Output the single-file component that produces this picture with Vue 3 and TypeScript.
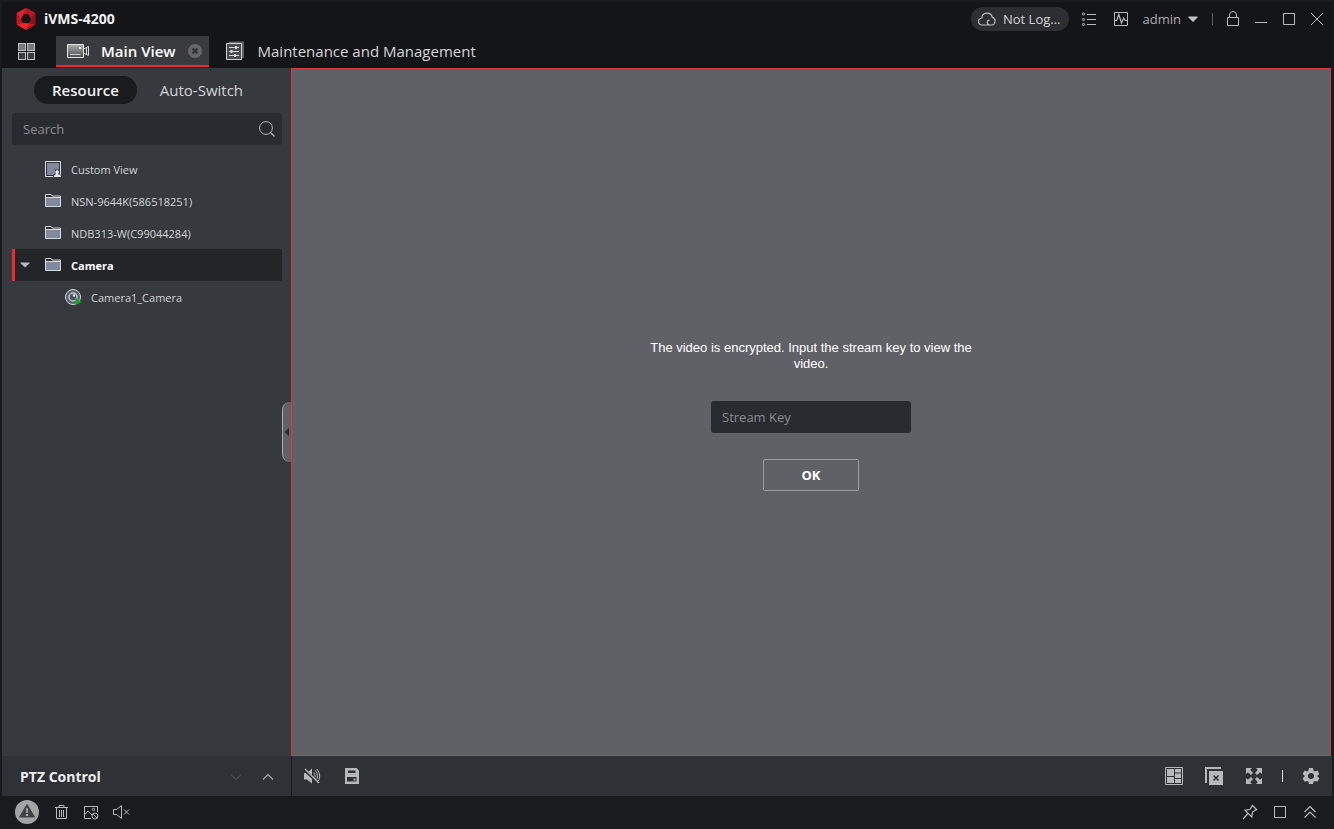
<script setup lang="ts">
import { ref } from 'vue'

interface TreeNode {
  label: string
  icon: 'view' | 'folder' | 'camera'
  expanded?: boolean
  selected?: boolean
  child?: boolean
}

const nodes: TreeNode[] = [
  { label: 'Custom View', icon: 'view' },
  { label: 'NSN-9644K(586518251)', icon: 'folder' },
  { label: 'NDB313-W(C99044284)', icon: 'folder' },
  { label: 'Camera', icon: 'folder', expanded: true, selected: true },
  { label: 'Camera1_Camera', icon: 'camera', child: true },
]

const search = ref('')
const streamKey = ref('')
</script>

<template>
  <div class="window">
    <header class="titlebar">
      <div class="brand">
        <svg class="logo" width="20" height="22" viewBox="0 0 20 22">
          <path d="M10 0L19.300 5v11.500L10 22 .7 16.500V5z" fill="#b3141b" />
          <path d="M10 0L.7 5 4.500 11.500 7.500 6z" fill="#d8262c" />
          <path d="M10 0l9.300 5L15 10.500 12.500 6h-5z" fill="#b51a20" />
          <path d="M19.300 5v11.500L13 15.500l2-5z" fill="#8e0f16" />
          <path d="M.7 5v11.500l6-1.500-2.200-4z" fill="#c9121a" />
          <path d="M.7 16.500L10 22l3.500-6.500L6.700 15z" fill="#f0222a" />
          <path d="M13.500 15.500L10 22l9.300-5.500z" fill="#c8161d" />
          <path d="M8 6h4l3 5-1.800 4H6.800L5 11z" fill="#141518" />
        </svg>
        <span>iVMS-4200</span>
      </div>
      <div class="tools">
        <button class="login">
          <svg width="18" height="16" viewBox="0 0 18 16" fill="none" stroke="#b9babb" stroke-width="1.200">
            <path d="M9 14H4.200A3.500 3.500 0 0 1 3.800 7a5.300 5.300 0 0 1 10.500-.6A3.900 3.900 0 0 1 13.700 14H12c-3.500 0-3.600-4.600-.4-4.800M9 14h4" />
          </svg>
          <span>Not Log...</span>
        </button>
        <button class="ico" aria-label="Task list">
          <svg width="16" height="16" viewBox="0 0 16 16" fill="none" stroke="#b9babb">
            <path d="M6 3.500h9M6 8.500h9M6 13.500h9" />
            <circle cx="2.500" cy="3" r="1.100" /><circle cx="2.500" cy="8.500" r="1.100" /><circle cx="2.500" cy="13.500" r="1.100" />
          </svg>
        </button>
        <button class="ico" aria-label="Activity">
          <svg width="16" height="16" viewBox="0 0 16 16" fill="none" stroke="#b9babb">
            <path d="M1.500 1.500h13v13h-13z" /><path d="M1.500 9.500h2.200l2.100-6 2.700 8.500 2.200-5 1.500 2.500h2.300" stroke-width="1.200" />
          </svg>
        </button>
        <button class="user">
          <span>admin</span>
          <svg width="10" height="6" viewBox="0 0 10 6"><path d="M.5.500h9v1L5 6 .5 1.500z" fill="#c4c4c4" /></svg>
        </button>
        <i class="rule"></i>
        <button class="ico lock" aria-label="Lock">
          <svg width="16" height="16" viewBox="0 0 16 16" fill="none" stroke="#b9babb">
            <path d="M2.500 6.500h11v8h-11zM4.500 6.500V4a3.500 3.500 0 0 1 7 0v2.500" />
          </svg>
        </button>
        <button class="ico win" aria-label="Minimize">
          <svg width="16" height="16" viewBox="0 0 16 16"><path d="M2 11.500h12" stroke="#b9babb" /></svg>
        </button>
        <button class="ico win" aria-label="Maximize">
          <svg width="16" height="16" viewBox="0 0 16 16"><path d="M2.500 2.500h11v11h-11z" fill="none" stroke="#b9babb" /></svg>
        </button>
        <button class="ico win" aria-label="Close">
          <svg width="16" height="16" viewBox="0 0 16 16"><path d="M2 2l12 12M14 2L2 14" stroke="#b9babb" /></svg>
        </button>
      </div>
    </header>

    <nav class="tabs">
      <button class="apps" aria-label="All modules">
        <svg width="17" height="17" viewBox="0 0 17 17" stroke="#c0c1c2">
          <g fill="#77797b"><rect x=".5" y=".5" width="7" height="7" /><rect x="9.500" y=".5" width="7" height="7" /></g>
          <g fill="#3a3c3e"><rect x=".5" y="9.500" width="7" height="7" /><rect x="9.500" y="9.500" width="7" height="7" /></g>
        </svg>
      </button>
      <div class="tab active">
        <button class="tab-name">
          <svg width="23" height="16" viewBox="0 0 23 16">
            <defs><linearGradient id="cam" x2="0" y2="1"><stop stop-color="#aeaeae" /><stop offset="1" stop-color="#4a4b4d" /></linearGradient></defs>
            <path d="M.5 1.500h16v13H.5z" fill="url(#cam)" stroke="#e3e3e3" />
            <path d="M3 11.500h10.500" stroke="#d5d5d5" /><path d="M12 4h2v2h-2z" fill="#eee" />
            <path d="M16.500 6l5-2.500v9l-5-2.500M19.500 4.500v7" fill="none" stroke="#dadada" />
          </svg>
          <span>Main View</span>
        </button>
        <button class="tab-close" aria-label="Close tab">
          <svg width="14" height="14" viewBox="0 0 14 14"><circle cx="7" cy="7" r="7" fill="#66676a" /><path d="M4.500 4.500l5 5M9.500 4.500l-5 5" stroke="#2e2f31" stroke-width="2" /></svg>
        </button>
      </div>
      <button class="tab plain">
        <svg width="20" height="20" viewBox="0 0 20 20">
          <path d="M4 .5h15V17h-2V3H4z" fill="#606163" />
          <path d="M1.500 2.500h15v16h-15z" fill="#4a4b4e" stroke="#d0d0d0" />
          <path d="M4 6.500h10M4 10.500h10M4 14.500h10" stroke="#d8d8d8" />
          <path d="M10 5h2v3h-2zM5.500 9h2v3h-2zM9 13h2v3H9z" fill="#d8d8d8" />
        </svg>
        <span>Maintenance and Management</span>
      </button>
    </nav>

    <main class="body">
      <aside class="side">
        <div class="modes">
          <button class="mode on">Resource</button>
          <button class="mode">Auto-Switch</button>
        </div>
        <label class="search">
          <input v-model="search" type="text" placeholder="Search" aria-label="Search" />
          <svg width="16" height="16" viewBox="0 0 16 16" fill="none" stroke="#b3b4b6"><circle cx="7" cy="7" r="6.400" /><path d="M11.500 11.500l4 4" stroke-width="1.200" /></svg>
        </label>
        <ul class="tree">
          <li v-for="node in nodes" :key="node.label" :class="{ selected: node.selected, child: node.child }">
            <button class="node">
              <span class="twist">
                <svg v-if="node.expanded" width="10" height="6" viewBox="0 0 10 6"><path d="M.5.500h9v.7L5 5.500.5 1.200z" fill="#b8b9ba" /></svg>
              </span>
              <svg v-if="node.icon === 'view'" width="16" height="16" viewBox="0 0 16 16">
                <path d="M.5.500h15v15H.5z" fill="#2d3034" stroke="#e0e1e3" /><path d="M2 2h12v12H2z" fill="#8189a0" />
                <path d="M8 16c0-3 1-3 2.500-3.500L9.700 8.500h4.600l-.8 4C15.500 13 16 13.500 16 16z" fill="#36393e" />
                <path d="M9 16c0-2 1-2.500 2.200-2.800-1.500-1.700-.9-4 1-4s2.300 2.300.8 4C15 13.500 16 14 16 16z" fill="#e8e8e8" />
              </svg>
              <svg v-else-if="node.icon === 'folder'" width="16" height="14" viewBox="0 0 16 14">
                <path d="M.5 12.500V.500h5.700l1 1.500h8.300v10.500z" fill="#2d3034" stroke="#d6d7d9" />
                <path d="M1 3.500h14" stroke="#d6d7d9" /><path d="M1 4h14v8H1z" fill="#8189a0" />
              </svg>
              <svg v-else width="17" height="17" viewBox="0 0 17 17">
                <circle cx="8" cy="8" r="7.500" fill="#59616e" stroke="#d7dae0" /><circle cx="8" cy="8" r="4" fill="#4b5261" stroke="#bfc4ce" stroke-width="1.500" />
                <circle cx="9" cy="6.500" r="1.300" fill="#e4e6ea" /><path d="M10.500 9v7.500l6-3.700z" fill="#12a51f" />
              </svg>
              <span class="name">{{ node.label }}</span>
            </button>
          </li>
        </ul>
        <button class="collapse" aria-label="Collapse panel">
          <svg width="5" height="8" viewBox="0 0 5 8"><path d="M5 0v8L.5 4z" fill="#2b2e32" /></svg>
        </button>
      </aside>
      <section class="video">
        <form class="prompt" @submit.prevent>
          <p>The video is encrypted. Input the stream key to view the video.</p>
          <input v-model="streamKey" type="text" placeholder="Stream Key" aria-label="Stream Key" />
          <button type="submit">OK</button>
        </form>
      </section>
    </main>

    <div class="controls">
      <div class="ptz">
        <h2>PTZ Control</h2>
        <button class="ico" aria-label="Down"><svg width="16" height="16" viewBox="0 0 16 16"><path d="M3 5.500l5 5 5-5" fill="none" stroke="#5c5f63" /></svg></button>
        <button class="ico" aria-label="Up"><svg width="16" height="16" viewBox="0 0 16 16"><path d="M3 10.500l5-5 5 5" fill="none" stroke="#a9abad" stroke-width="1.200" /></svg></button>
      </div>
      <div class="viewbar">
        <button class="big" aria-label="Audio off">
          <svg width="18" height="18" viewBox="0 0 18 18">
            <path d="M1 6h3l5-4.500v15L4 12.500H1z" fill="#b7b8b9" />
            <path d="M11 5.500q2.500 3.500 0 7M12.500 3.500q4 5.500 0 11M14 2q5.500 7 0 14" fill="none" stroke="#b7b8b9" />
            <path d="M1 2.500l15 14" stroke="#2e3136" stroke-width="3" /><path d="M2 2l14 14" stroke="#b7b8b9" stroke-width="1.300" />
          </svg>
        </button>
        <button class="big" aria-label="Save view">
          <svg width="18" height="18" viewBox="0 0 18 18">
            <path fill-rule="evenodd" d="M2 1h11.500L16 3.500V17H2zM5 3.500v2.500h7.500V3.500zM4 10v4.500h9.500V10zM10.500 11.500h2v2h-2z" fill="#b7b8b9" />
          </svg>
        </button>
        <span class="fill"></span>
        <button class="big" aria-label="Window division">
          <svg width="18" height="18" viewBox="0 0 18 18">
            <path d="M.5.500h17v17H.5z" fill="none" stroke="#b7b8b9" />
            <path d="M2 2h7v7H2zM2 10h7v6H2zM10 2h6v3.500h-6zM10 6.500h6V11h-6zM10 12h6v4h-6z" fill="#b7b8b9" />
          </svg>
        </button>
        <button class="big" aria-label="Close all">
          <svg width="18" height="18" viewBox="0 0 18 18">
            <path d="M0 0h16v2H2v14H0z" fill="#b7b8b9" /><path d="M4 4h14v14H4z" fill="#b7b8b9" /><path d="M8.500 8.500l5 5M13.500 8.500l-5 5" stroke="#2e3136" stroke-width="1.500" />
          </svg>
        </button>
        <button class="big" aria-label="Full screen">
          <svg width="18" height="18" viewBox="0 0 18 18" fill="#b7b8b9">
            <path d="M1 1h6L5.200 3 8 6 6 8 3 5.200 1 7zM17 1v6l-2-1.800L12 8l-2-2 2.800-3L11 1zM1 17v-6l2 1.800L6 10l2 2-2.800 3L7 17zM17 17h-6l1.800-2L10 12l2-2 3 2.800 2-1.800z" />
          </svg>
        </button>
        <i class="rule light"></i>
        <button class="big" aria-label="Settings">
          <svg width="18" height="18" viewBox="0 0 18 18">
            <path fill-rule="evenodd" fill="#b7b8b9" d="M7 1h4l.5 2.500 1.500.9 2.400-.9 2 3.400L15.500 8.500v1.300l1.900 1.500-2 3.400-2.400-.8-1.500.9L11 17H7l-.5-2.200-1.500-.9-2.400.8-2-3.400 1.900-1.500V8.500L.6 6.900l2-3.400 2.400.9 1.500-.9zM9 6a3 3 0 1 0 0 6 3 3 0 0 0 0-6z" />
          </svg>
        </button>
      </div>
    </div>

    <footer class="status">
      <button class="alarm" aria-label="Alarm">
        <svg width="24" height="24" viewBox="0 0 24 24"><circle cx="12" cy="12" r="12" fill="#a3a4a5" /><path d="M12 4.500l7.500 12.500h-15z" fill="#414345" stroke="#414345" stroke-linejoin="round" /><path d="M11 8.500h2l-.4 4.500h-1.200zM11 14h2v2h-2z" fill="#b5b6b7" /></svg>
      </button>
      <button class="ico" aria-label="Delete">
        <svg width="16" height="16" viewBox="0 0 16 16" fill="none" stroke="#b9babb"><path d="M2 3.500h13M6 3V1.500h5V3M3.500 4v10.500h10V4M6.500 6v7M8.500 6v7M10.500 6v7" /></svg>
      </button>
      <button class="ico" aria-label="Disable pictures">
        <svg width="16" height="16" viewBox="0 0 16 16" fill="none" stroke="#b9babb"><path d="M8 14.500H1.500v-12h13V8M2 10.500l3-3.500 4 4" /><circle cx="10.500" cy="5.500" r="1.200" /><circle cx="12" cy="12" r="3" /><path d="M10 10l4 4" /></svg>
      </button>
      <button class="ico" aria-label="Mute">
        <svg width="18" height="16" viewBox="0 0 18 16" fill="none" stroke="#b9babb"><path d="M.5 5.500h3L8.500 1.500v13l-5-4h-3zM11 5.500l5 5M16 5.500l-5 5" /></svg>
      </button>
      <span class="fill"></span>
      <button class="ico" aria-label="Pin">
        <svg width="16" height="16" viewBox="0 0 16 16" fill="none" stroke="#b9babb" stroke-width="1.200"><path d="M10 1l5 5M10.500 1.500L8 5.500l-5 .7L9.800 13l.7-5L14.500 5.500M6 9.500L1 15" /></svg>
      </button>
      <button class="ico" aria-label="Restore"><svg width="16" height="16" viewBox="0 0 16 16"><path d="M2.500 2.500h11v11h-11z" fill="none" stroke="#b9babb" /></svg></button>
      <button class="ico" aria-label="Expand"><svg width="16" height="16" viewBox="0 0 16 16" fill="none" stroke="#b9babb" stroke-width="1.200"><path d="M2.500 8L8 2.500 13.500 8M2.500 13.500L8 8l5.500 5.500" /></svg></button>
    </footer>
  </div>
</template>

<style>
body { background: #191c1e; }
</style>

<style scoped>
.window {
  box-sizing: border-box;
  min-height: 100vh;
  display: flex;
  flex-direction: column;
  padding: 2px 2px 0;
  background: #191c1e;
  color: #d4d5d6;
  font: 13px/16px "Open Sans", "Noto Sans", sans-serif;
}
button, input { font: inherit; color: inherit; background: none; border: 0; padding: 0; margin: 0; }
button { cursor: pointer; }
svg { display: block; flex: none; }
.fill { flex: 1; }
.titlebar { display: flex; justify-content: space-between; height: 34px; background: #141518; }
.brand { display: flex; align-items: center; gap: 8px; padding-left: 14px; color: #f2f2f2; font-size: 14px; font-weight: 700; }
.tools { display: flex; align-items: center; gap: 16px; padding-right: 7px; }
.login { display: flex; align-items: center; gap: 7px; height: 24px; padding: 0 8px 0 7px; border-radius: 12px; background: #2d2e32; margin-right: -4px; }
.user { display: flex; align-items: center; gap: 7px; color: #acadae; margin-left: -2px; }
.rule { width: 1px; height: 12px; background: #5a5c5e; margin-left: -2px; }
.rule.light { background: #d9dadb; }
.lock, .win { margin-left: -4px; }
.tabs { display: flex; height: 32px; background: #141518; }
.apps { padding: 0 21px 2px 16px; }
.tab { display: flex; align-items: center; font-size: 15px; line-height: 20px; }
.tab.active { box-sizing: border-box; gap: 12px; height: 31px; padding: 0 7px 0 11px; background: #3a3b3e; border-bottom: 2px solid #f5262c; color: #fff; font-weight: 600; }
.tab-name { display: flex; align-items: center; gap: 11px; }
.plain { gap: 13px; padding-left: 16px; height: 29px; }
.body { flex: 1; display: flex; }
.side { position: relative; box-sizing: border-box; flex: none; width: 289px; padding: 8px 9px 0 10px; background: #36393e; }
.modes { display: flex; padding-left: 22px; font-size: 15px; line-height: 28px; gap: 23px; }
.mode.on { padding: 0 18px; border-radius: 14px; background: #191c1f; color: #f0f0f0; font-weight: 600; }
.search { display: flex; align-items: center; height: 32px; margin-top: 9px; padding: 0 7px 0 11px; background: #282b2f; border-radius: 3px; }
.search input { flex: 1; min-width: 0; outline: 0; }
input::placeholder { color: #8b8d8f; opacity: 1; }
.tree { list-style: none; margin: 8px 0 0; padding: 0; font-size: 11px; }
.node { box-sizing: border-box; display: flex; align-items: center; width: 100%; height: 32px; text-align: left; padding-left: 8px; }
.selected { box-shadow: inset 3px 0 #f5262c; background: #232629; color: #fff; font-weight: 700; }
.twist { width: 25px; }
.name { margin-left: 10px; padding-top: 1px; }
.child .twist { width: 45px; }
.child .name { margin-left: 9px; }
.collapse { position: absolute; right: 0; top: calc(50% - 10px); width: 9px; height: 60px; border-radius: 8px 0 0 8px; background: #606166; border-left: 1px solid #a9aaac; padding-left: 1px; }
.video { flex: 1; display: flex; align-items: center; justify-content: center; margin-right: 1px; background: #606166; border: 1px solid #d83a3c; }
.prompt { display: flex; flex-direction: column; align-items: center; padding-top: 6px; }
.prompt p { margin: 0 0 29px; width: 340px; text-align: center; color: #fff; font: 13px/16px "Liberation Sans", Arial, sans-serif; }
.prompt input { box-sizing: border-box; width: 200px; height: 32px; padding: 0 11px; background: #282b2f; border-radius: 3px; outline: 0; }
.prompt button { box-sizing: border-box; width: 96px; height: 32px; margin-top: 26px; border: 1px solid #9c9da0; border-radius: 2px; color: #fff; font-weight: 700; }
.controls { display: flex; height: 40px; background: #2e3136; }
.ptz { box-sizing: border-box; flex: none; width: 290px; display: flex; align-items: center; gap: 16px; padding: 1px 15px 0 18px; border-right: 1px solid #191c1e; }
.ptz h2 { flex: 1; margin: 0; color: #eee; font-size: 14px; font-weight: 700; }
.viewbar { flex: 1; display: flex; align-items: center; gap: 22px; padding: 0 12px 0 11px; }
.viewbar .rule { margin: 0 -3px; }
.status { box-sizing: border-box; display: flex; align-items: center; gap: 14px; height: 33px; padding: 0 14px 1px 13px; }
</style>
